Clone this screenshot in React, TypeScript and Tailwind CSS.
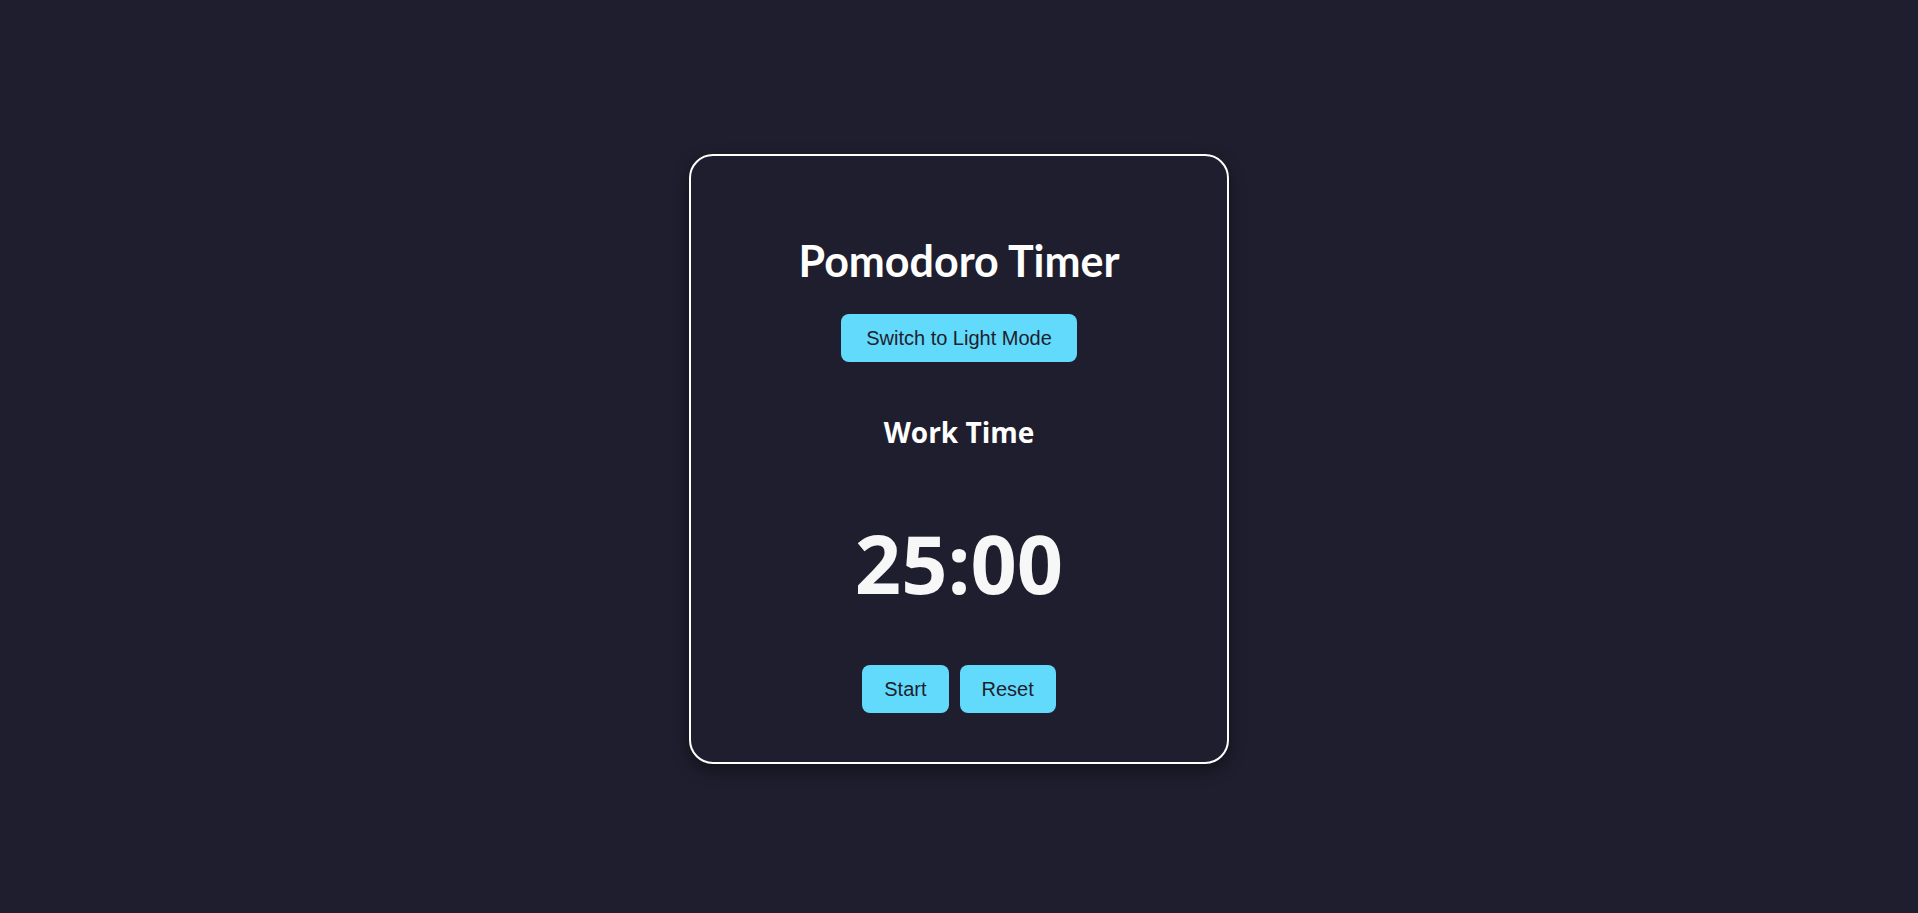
export default function App() {
  return (
    <div className="flex min-h-screen items-center justify-center bg-[#1f1e2e] pt-[5px] font-['Open_Sans',sans-serif]">
      <div className="w-[540px] rounded-[24px] border-2 border-white px-8 pb-[49px] pt-[79px] text-center text-white shadow-[0_6px_16px_rgba(0,0,0,0.45)]">
        <h1 className="font-['Lato',sans-serif] text-[43px] font-bold leading-[1.2]">Pomodoro Timer</h1>
        <button className="mt-[27px] h-[48px] rounded-[8px] bg-[#61dafb] px-[25px] font-['Liberation_Sans',Arial,sans-serif] text-[20px] text-[#1f1e2e]">
          Switch to Light Mode
        </button>
        <h2 className="mt-[54px] text-[28px] font-bold leading-[1.2]">Work Time</h2>
        <div className="mt-[72px] text-[81px] font-bold leading-none text-[#f7f7f7]">25:00</div>
        <div className="mt-[62px] flex justify-center gap-[11px] font-['Liberation_Sans',Arial,sans-serif] text-[20px] text-[#1f1e2e]">
          <button className="h-[48px] rounded-[8px] bg-[#61dafb] px-[22px]">Start</button>
          <button className="h-[48px] rounded-[8px] bg-[#61dafb] px-[22px]">Reset</button>
        </div>
      </div>
    </div>
  );
}
